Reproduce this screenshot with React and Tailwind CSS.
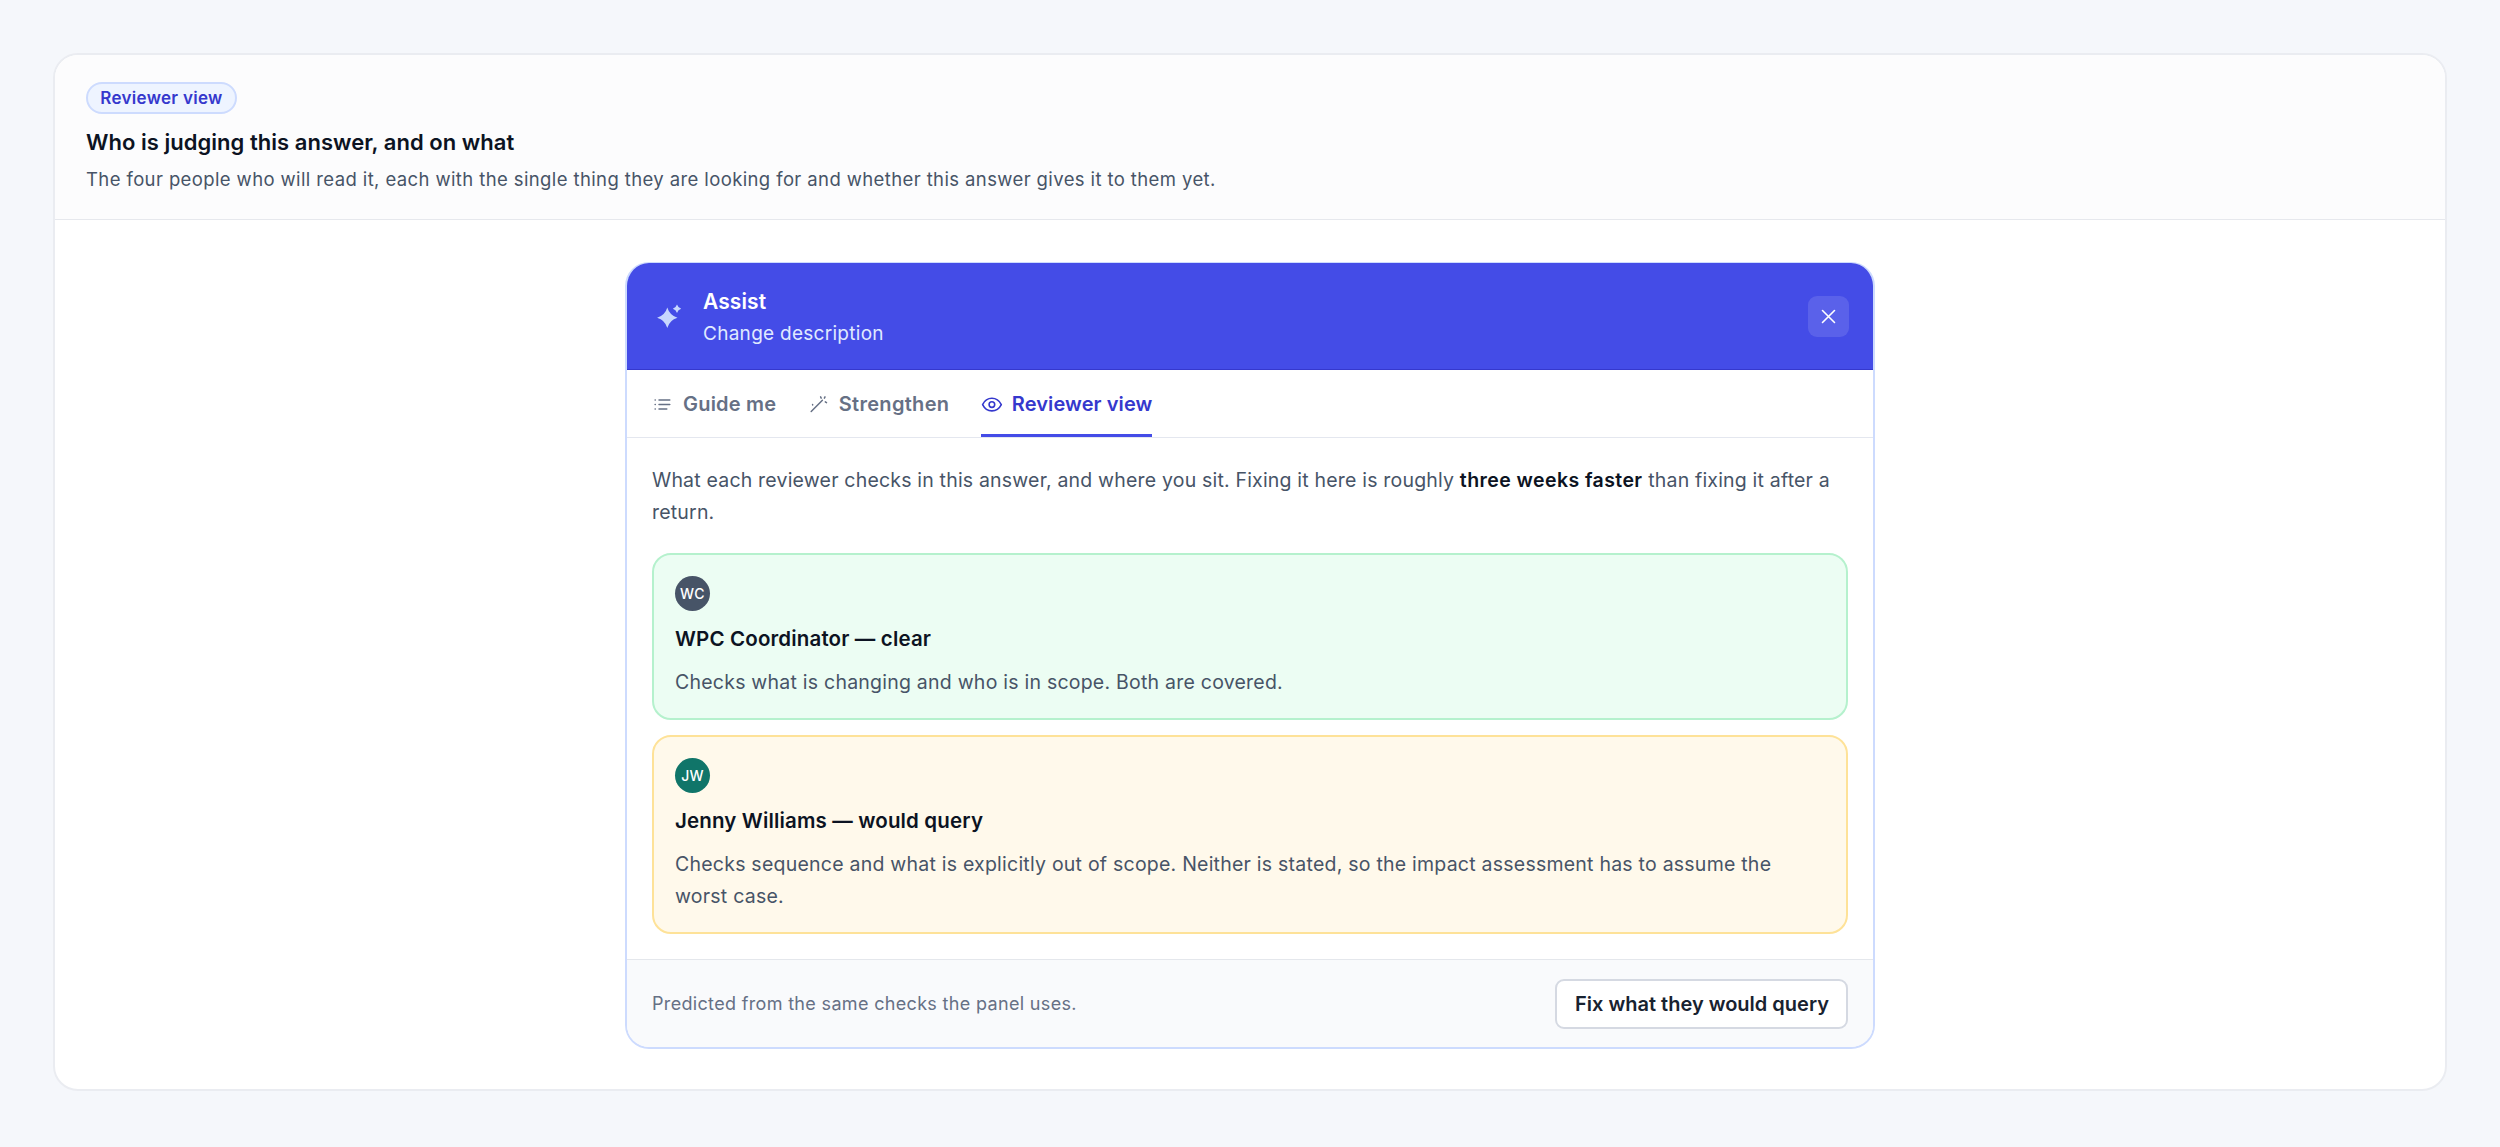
const TABS = [
  { id: "guide", label: "Guide me", tracking: "tracking-[0.2px]" },
  { id: "strengthen", label: "Strengthen", tracking: "tracking-[0.3px]" },
  { id: "reviewer", label: "Reviewer view", tracking: "tracking-[0.1px]" },
];

const REVIEWERS = [
  {
    initials: "WC",
    title: "WPC Coordinator — clear",
    text: "Checks what is changing and who is in scope. Both are covered.",
    card: "bg-[#ecfdf3] border-[#b5f1cd]",
    avatar: "bg-[#475467]",
  },
  {
    initials: "JW",
    title: "Jenny Williams — would query",
    text: "Checks sequence and what is explicitly out of scope. Neither is stated, so the impact assessment has to assume the worst case.",
    card: "bg-[#fff9eb] border-[#fee298]",
    avatar: "bg-[#107569]",
  },
];

const SparkleIcon = () => (
  <svg width="30" height="30" viewBox="0 0 30 30" fill="#c7d7fe">
    <path d="M15.3 4.5 Q17.6 12.4 25.5 14.7 Q17.6 17 15.3 24.9 Q13 17 5.1 14.7 Q13 12.4 15.3 4.5Z" />
    <path d="M25 1.6 Q26 4.8 29.2 5.8 Q26 6.8 25 10 Q24 6.8 20.8 5.8 Q24 4.8 25 1.6Z" />
  </svg>
);

const TabIcon = ({ id }) => {
  if (id === "guide") {
    return (
      <svg width="20" height="20" viewBox="0 0 20 20" fill="none" stroke="currentColor" strokeWidth="1.5" strokeLinecap="round">
        <path d="M7 4.9H17.8M7 9.4H17.8M7 13.9H14.8" />
        <path d="M3.1 4.9H3.3M3.1 9.4H3.3M3.1 13.9H3.3" />
      </svg>
    );
  }
  if (id === "strengthen") {
    return (
      <svg width="20" height="20" viewBox="0 0 20 20" fill="none" stroke="currentColor" strokeWidth="1.5" strokeLinecap="round">
        <path d="M3.2 16.5L14.4 5.3M4.6 9.4V9.9M12.6 1.9L13.2 3.1M17 1.9L16.4 3.1M18.5 7.7L17.3 6.9" />
      </svg>
    );
  }
  return (
    <svg className="overflow-visible" width="20" height="20" viewBox="0 0 20 20" fill="none" stroke="currentColor" strokeWidth="1.6" strokeLinejoin="round">
      <path d="M1.6 9.6C3.6 5.5 7 3.3 10.9 3.3S18.2 5.5 20.3 9.6C18.2 13.7 14.8 15.9 10.9 15.9S3.6 13.7 1.6 9.6Z" />
      <circle cx="10.9" cy="9.6" r="2.8" />
    </svg>
  );
};

const ReviewerCard = ({ reviewer }) => (
  <div className={`rounded-[19px] border-2 px-[21px] pt-[21px] pb-5 ${reviewer.card}`}>
    <div
      className={`flex h-[35px] w-[35px] items-center justify-center rounded-full text-[14px] font-medium tracking-[0.3px] text-white ${reviewer.avatar}`}
    >
      {reviewer.initials}
    </div>
    <h3 className="mt-[13px] text-[20.5px] leading-[29px] font-semibold tracking-[0.15px] text-[#0c1322]">
      {reviewer.title}
    </h3>
    <p className="mt-[13px] text-[19.5px] leading-8 tracking-[0.23px] text-[#475467]">
      {reviewer.text}
    </p>
  </div>
);

const AssistPanel = () => (
  <div className="w-[1250px] overflow-hidden rounded-[24px] border-2 border-t border-[#cddbfe] bg-white">
    {/* Header */}
    <div className="flex items-center border-b border-[#3538cd] bg-[#444ce7] px-[25px] pt-[23px] pb-[19px]">
      <SparkleIcon />
      <div className="ml-[21px] flex-1">
        <div className="text-[21px] leading-8 font-semibold tracking-[0.1px] text-white">
          Assist
        </div>
        <div className="text-[19px] leading-8 tracking-[0.28px] text-[#e0eaff]">
          Change description
        </div>
      </div>
      <button className="mr-[-1px] mb-[3px] flex h-[41px] w-[41px] items-center justify-center rounded-[9px] bg-white/12">
        <svg width="15" height="15" viewBox="0 0 15 15" fill="none" stroke="#ffffff" strokeWidth="1.6" strokeLinecap="round">
          <path d="M1.5 1.5L13.5 13.5M13.5 1.5L1.5 13.5" />
        </svg>
      </button>
    </div>

    {/* Tabs */}
    <div className="flex gap-[31.5px] border-b border-[#e4e7ef] px-[25px]">
      {TABS.map((tab) => (
        <button
          key={tab.id}
          className={`flex items-center gap-[11px] border-b-[3px] pt-[18px] pb-[13px] text-[20px] leading-[33px] font-semibold ${tab.tracking} ${
            tab.id === "reviewer"
              ? "border-[#444ce7] text-[#3538cd]"
              : "border-transparent text-[#667085]"
          }`}
        >
          <TabIcon id={tab.id} />
          {tab.label}
        </button>
      ))}
    </div>

    {/* Body */}
    <div className="px-[25px] pt-[26px] pb-[25px]">
      <p className="text-[19.5px] leading-8 tracking-[0.19px] text-[#475467]">
        What each reviewer checks in this answer, and where you sit. Fixing it here is roughly{" "}
        <strong className="font-semibold tracking-[0.42px] text-[#0c1322]">three weeks faster</strong> than fixing it after a return.
      </p>
      <div className="mt-[25px] flex flex-col gap-[15px]">
        {REVIEWERS.map((r) => (
          <ReviewerCard key={r.initials} reviewer={r} />
        ))}
      </div>
    </div>

    {/* Footer */}
    <div className="flex items-center justify-between border-t border-[#e4e7ec] bg-[#f9fafc] px-[25px] pt-[19px] pb-[18px]">
      <span className="pb-px text-[18px] tracking-[0.33px] text-[#667085]">
        Predicted from the same checks the panel uses.
      </span>
      <button className="h-[50px] w-[293px] rounded-[9px] border-2 border-[#d5d9e2] bg-white pl-px text-[20px] font-semibold whitespace-nowrap text-[#182230]">
        Fix what they would query
      </button>
    </div>
  </div>
);

const App = () => (
  <div className="min-h-screen bg-[#f5f7fb] px-[53px] pt-[53px] font-['Inter',sans-serif]">
    <div className="overflow-hidden rounded-[25px] border-2 border-[#eaecf1] bg-white">
      <div className="border-b border-[#e6e8ed] bg-[#fcfcfd] px-[31px] pt-[27px] pb-[26px]">
        <span className="flex h-8 w-[151px] items-center justify-center rounded-full border-2 border-[#cddbfe] bg-[#eef4ff] pt-px text-[17px] font-semibold tracking-[0.3px] whitespace-nowrap text-[#3538cd]">
          Reviewer view
        </span>
        <h2 className="mt-[14px] text-[22px] leading-7 font-semibold tracking-[0.03px] text-[#0c1322]">
          Who is judging this answer, and on what
        </h2>
        <p className="mt-[9px] text-[18.5px] leading-7 tracking-[0.39px] text-[#475467]">
          The four people who will read it, each with the single thing they are looking for and whether this answer gives it to them yet.
        </p>
      </div>
      <div className="flex justify-center pt-[42px] pb-10">
        <AssistPanel />
      </div>
    </div>
  </div>
);

export default App;
